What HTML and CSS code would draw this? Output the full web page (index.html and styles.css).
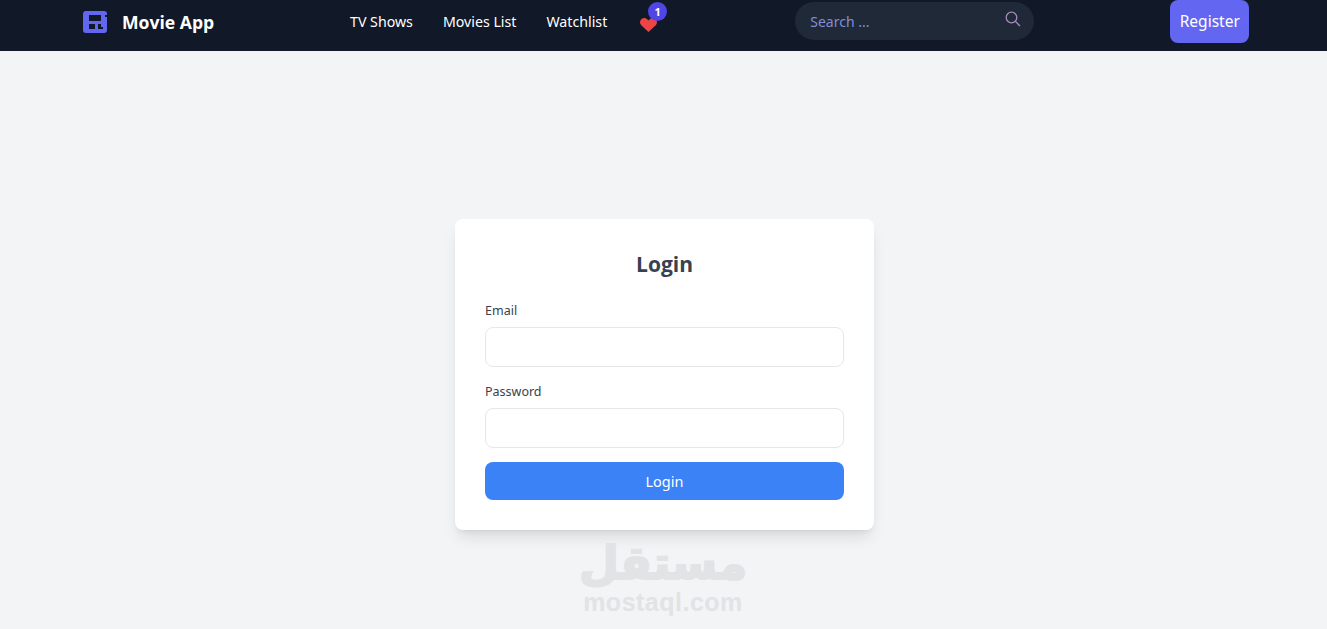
FILE: index.html
```html
<!DOCTYPE html>
<html>
	<head>
		<meta charset="UTF-8"/>
		<title>Movie App</title>
		<link rel="stylesheet" href="styles.css">
	</head>
	<body>
		<nav class="navbar">
			<a class="brand" href="#">
				<svg class="brand-icon" width="24" height="22" viewBox="0 0 24 22">
					<path fill="#6366f1" fill-rule="evenodd" d="M3 0H21A3 3 0 0 1 24 3V19A3 3 0 0 1 21 22H3A3 3 0 0 1 0 19V3A3 3 0 0 1 3 0ZM6 4V10H18V4ZM6 13V18H12V13ZM15 13V18H20V16H18V13ZM22 4V6H24V4Z"/>
				</svg>
				<span>Movie App</span>
			</a>
			<ul class="links">
				<li><a href="#">TV Shows</a></li>
				<li><a href="#">Movies List</a></li>
				<li><a href="#">Watchlist</a></li>
			</ul>
			<a class="favs" href="#">
				<svg width="17" height="14" viewBox="0 0 17 14">
					<path fill="#ef4444" d="M8.500 14L1.200 7.200C-.4 5.600-.4 3 1.200 1.300 2.900-.4 5.500-.4 7.200 1.200L8.500 2.400 9.800 1.200C11.500-.4 14.100-.4 15.800 1.300 17.400 3 17.400 5.600 15.800 7.200Z"/>
				</svg>
				<span class="badge">1</span>
			</a>
			<form class="search">
				<input type="text" placeholder="Search ...">
				<svg width="16" height="16" viewBox="0 0 16 16" fill="none" stroke="#a78bba" stroke-width="1.3">
					<circle cx="6.500" cy="6.500" r="5.300"/>
					<path d="M10.400 10.400L15 15"/>
				</svg>
			</form>
			<a class="register" href="#">Register</a>
		</nav>
		<main class="page">
			<form class="card">
				<h2>Login</h2>
				<label for="email">Email</label>
				<input id="email" type="email">
				<label for="password">Password</label>
				<input id="password" type="password">
				<button type="button">Login</button>
			</form>
		</main>
		<div class="watermark">
			<div class="wm-ar">مستقل</div>
			<div class="wm-en">mostaql.com</div>
		</div>
	</body>
</html>
```

FILE: styles.css
```css
*{
	box-sizing: border-box;
}
html, body{
	height: 100%;
}
body{
	margin: 0;
	overflow: hidden;
	background-color: #f3f4f6;
	font-family: "Noto Sans", "Open Sans", sans-serif;
}
a{
	color: #fff;
	text-decoration: none;
}
.navbar{
	display: flex;
	align-items: flex-start;
	height: 51px;
	padding-left: 83px;
	background-color: #111827;
}
.brand{
	display: flex;
	align-items: center;
	gap: 15px;
	width: 267px;
	height: 43px;
	font-family: "Open Sans", sans-serif;
	font-size: 17.600px;
	font-weight: 700;
}
.links{
	display: flex;
	gap: 30px;
	margin: 0;
	padding: 0;
	list-style: none;
	line-height: 43px;
	font-size: 14.200px;
}
.favs{
	position: relative;
	margin: 15px 0 0 33px;
	height: 14px;
}
.badge{
	position: absolute;
	left: 8px;
	top: -13px;
	width: 19px;
	height: 19px;
	border-radius: 50%;
	background-color: #4f46e5;
	font-size: 11px;
	font-weight: 700;
	line-height: 19px;
	text-align: center;
}
.search{
	display: flex;
	align-items: center;
	justify-content: space-between;
	width: 239px;
	height: 38px;
	margin: 2px 0 0 138px;
	padding: 0 13px 0 15px;
	border-radius: 19px;
	background-color: #1f2937;
}
.search input{
	width: 170px;
	padding: 0;
	border: 0;
	outline: 0;
	background: none;
	color: #fff;
	font: inherit;
	font-size: 14px;
}
.search input::placeholder{
	color: #858cd6;
	opacity: 1;
}
.search svg{
	margin-top: -4px;
}
.register{
	width: 79px;
	height: 43px;
	margin-left: 136px;
	border-radius: 8px;
	background-color: #6366f1;
	font-size: 15.500px;
	line-height: 42px;
	text-align: center;
}
.page{
	display: flex;
	justify-content: center;
	padding: 168px 0 0 2px;
}
.card{
	display: flex;
	flex-direction: column;
	width: 419px;
	height: 311px;
	padding: 30px;
	border-radius: 8px;
	background-color: #fff;
	box-shadow: 0 10px 15px -3px rgba(0,0,0,0.1), 0 4px 6px -4px rgba(0,0,0,0.1);
}
.card h2{
	margin: 0 0 21px;
	color: #374151;
	font-family: "Open Sans", sans-serif;
	font-size: 21px;
	font-weight: 700;
	line-height: 30px;
	text-align: center;
}
.card label{
	margin-bottom: 6px;
	padding-top: 1px;
	color: #374151;
	font-size: 12.500px;
	line-height: 20px;
}
.card input{
	flex: none;
	height: 40px;
	margin-bottom: 14px;
	border: 1px solid #e5e7eb;
	border-radius: 8px;
	outline: 0;
}
.card button{
	flex: none;
	height: 38px;
	border: 0;
	border-radius: 8px;
	background-color: #3b82f6;
	color: #fff;
	font: inherit;
	font-size: 14.500px;
}
.watermark{
	position: absolute;
	left: 563px;
	top: 530px;
	width: 200px;
	color: #e2e3e5;
	text-align: center;
	font-weight: 700;
}
.wm-ar{
	padding-top: 6px;
	font-family: "DejaVu Sans", sans-serif;
	font-size: 46px;
	line-height: 54px;
	-webkit-text-stroke: 2px #e2e3e5;
}
.wm-en{
	font-family: "Liberation Sans", sans-serif;
	font-size: 25px;
	line-height: 24px;
	letter-spacing: 0.500px;
}
```
